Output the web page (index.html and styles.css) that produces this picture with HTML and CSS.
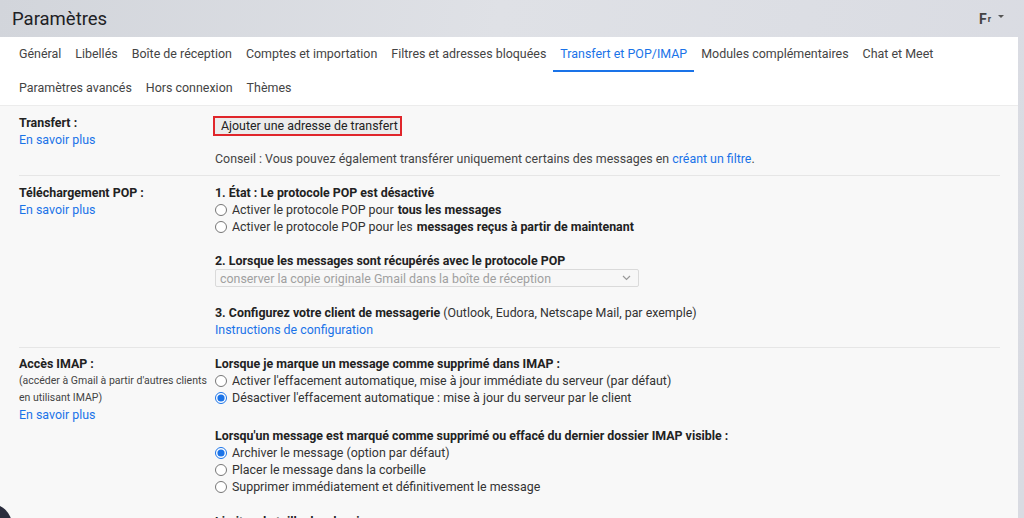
FILE: index.html
```html
<!doctype html>
<html lang="fr">
  <head>
    <meta charset="UTF-8" />
    <meta name="viewport" content="width=device-width, initial-scale=1.0" />
    <title>Paramètres</title>
    <link rel="stylesheet" href="styles.css">
  </head>
  <body>
    <header class="topbar">
      <h1>Paramètres</h1>
      <div class="input-tools">F<span class="small-r">r</span><span class="caret"></span></div>
    </header>

    <main class="settings">
      <nav class="tabs">
        <div class="tab-row">
          <a class="tab">Général</a>
          <a class="tab">Libellés</a>
          <a class="tab">Boîte de réception</a>
          <a class="tab">Comptes et importation</a>
          <a class="tab">Filtres et adresses bloquées</a>
          <a class="tab active">Transfert et POP/IMAP</a>
          <a class="tab">Modules complémentaires</a>
          <a class="tab">Chat et Meet</a>
        </div>
        <div class="tab-row">
          <a class="tab">Paramètres avancés</a>
          <a class="tab">Hors connexion</a>
          <a class="tab">Thèmes</a>
        </div>
      </nav>

      <div class="content">
        <section class="setting first">
          <div class="label">
            <b>Transfert :</b>
            <a class="link">En savoir plus</a>
          </div>
          <div class="value">
            <div class="highlight-box">
              <button class="btn">Ajouter une adresse de transfert</button>
            </div>
            <p class="hint">Conseil : Vous pouvez également transférer uniquement certains des messages en <a class="link">créant un filtre</a>.</p>
          </div>
        </section>

        <section class="setting">
          <div class="label">
            <b>Téléchargement POP :</b>
            <a class="link">En savoir plus</a>
          </div>
          <div class="value">
            <p class="heading">1. État : Le protocole POP est désactivé</p>
            <label class="option"><input type="radio" name="pop" /> Activer le protocole POP pour <b>tous les messages</b></label>
            <label class="option"><input type="radio" name="pop" /> Activer le protocole POP pour les <b>messages reçus à partir de maintenant</b></label>

            <p class="heading spaced">2. Lorsque les messages sont récupérés avec le protocole POP</p>
            <div class="select disabled">
              <span>conserver la copie originale Gmail dans la boîte de réception</span>
              <svg width="9" height="6" viewBox="0 0 9 6"><path d="M1 1l3.5 3.5L8 1" fill="none" stroke="#999" stroke-width="1.2"/></svg>
            </div>

            <p class="heading step3"><b>3. Configurez votre client de messagerie</b> (Outlook, Eudora, Netscape Mail, par exemple)</p>
            <a class="link">Instructions de configuration</a>
          </div>
        </section>

        <section class="setting last">
          <div class="label">
            <b>Accès IMAP :</b>
            <span class="note">(accéder à Gmail à partir d'autres clients en utilisant IMAP)</span>
            <a class="link">En savoir plus</a>
          </div>
          <div class="value">
            <p class="heading">Lorsque je marque un message comme supprimé dans IMAP :</p>
            <label class="option"><input type="radio" name="expunge" /> Activer l'effacement automatique, mise à jour immédiate du serveur (par défaut)</label>
            <label class="option"><input type="radio" name="expunge" checked /> Désactiver l'effacement automatique : mise à jour du serveur par le client</label>

            <p class="heading group">Lorsqu'un message est marqué comme supprimé ou effacé du dernier dossier IMAP visible :</p>
            <label class="option"><input type="radio" name="deleted" checked /> Archiver le message (option par défaut)</label>
            <label class="option"><input type="radio" name="deleted" /> Placer le message dans la corbeille</label>
            <label class="option"><input type="radio" name="deleted" /> Supprimer immédiatement et définitivement le message</label>

            <p class="heading group-next">Limites de taille des dossiers</p>
          </div>
        </section>
      </div>
    </main>

    <div class="corner-blob"></div>
  </body>
</html>
```

FILE: styles.css
```css
body {
  margin: 0;
  height: 518px;
  overflow: hidden;
  font-family: Roboto, "Liberation Sans", Arial, sans-serif;
  color: #222;
  background: linear-gradient(100deg, #d2d5db 0%, #dfe1e6 45%, #d9dbe2 100%);
}
.topbar {
  display: flex;
  align-items: center;
  justify-content: space-between;
  height: 37px;
  padding: 0 20px 0 12px;
}
.topbar h1 {
  margin: 0;
  font-size: 18.5px;
  font-weight: 400;
  color: #202124;
}
.input-tools {
  display: flex;
  align-items: center;
  font-size: 14px;
  font-weight: 700;
  color: #444;
}
.small-r {
  font-size: 9px;
  margin-left: 1px;
}
.caret {
  width: 0;
  height: 0;
  margin-left: 7px;
  margin-bottom: 4px;
  border-left: 3px solid transparent;
  border-right: 3px solid transparent;
  border-top: 3px solid #555;
}
.settings {
  margin-right: 6px;
  background: #f8f8f8;
  height: 481px;
}
.tabs {
  background: #fff;
  padding: 0 12px;
  border-bottom: 1px solid #ececec;
}
.tab-row {
  display: flex;
  height: 34px;
}
.tab {
  display: flex;
  align-items: center;
  padding: 0 7px;
  font-size: 12.45px;
  color: #444;
  white-space: nowrap;
  border-bottom: 2px solid transparent;
  margin-bottom: -1px;
}
.tab.active {
  color: #1a73e8;
  border-bottom-color: #1a73e8;
}
.content {
  padding: 0 18px 0 19px;
  font-size: 12.4px;
  line-height: 17px;
}
.setting {
  display: grid;
  grid-template-columns: 196px 1fr;
  padding: 8px 0 9px;
  border-bottom: 1px solid #e6e6e6;
}
.setting.first {
  padding-bottom: 8px;
}
.setting.last {
  border-bottom: none;
  padding-top: 7px;
}
.label {
  display: flex;
  flex-direction: column;
  align-items: flex-start;
}
.label b {
  color: #222;
}
.note {
  font-size: 10.5px;
  color: #444;
}
.link {
  color: #1a73e8;
  cursor: pointer;
}
.value {
  display: flex;
  flex-direction: column;
  align-items: flex-start;
  color: #333;
}
.value p {
  margin: 0;
}
.highlight-box {
  margin: 2px 0 0 -2px;
  border: 2px solid #e0262b;
  display: flex;
}
.btn {
  height: 16px;
  padding: 0 2px 0 6px;
  border: none;
  background: #ececec;
  font-family: inherit;
  font-size: 12.4px;
  line-height: 16px;
  color: #222;
}
.hint {
  margin-top: 14px !important;
  color: #444;
}
.heading {
  font-weight: 700;
  color: #222;
}
.heading.step3 {
  font-weight: 400;
  color: #333;
  margin-top: 17px;
}
.heading.step3 b {
  color: #222;
}
.spaced {
  margin-top: 17px !important;
}
.group {
  margin-top: 21px !important;
}
.group-next {
  margin-top: 18px !important;
}
.option {
  display: flex;
  align-items: center;
  color: #333;
}
.option b {
  color: #222;
  margin-left: 4px;
}
.option input {
  width: 12px;
  height: 12px;
  margin: 0 5px 0 0;
  accent-color: #1a73e8;
}
.select {
  display: flex;
  align-items: center;
  justify-content: space-between;
  box-sizing: border-box;
  width: 424px;
  height: 18px;
  padding: 0 7px 0 4px;
  border: 1px solid #dadada;
  border-radius: 2px;
  background: #f7f7f7;
  color: #a0a0a0;
}
.corner-blob {
  position: absolute;
  left: -30px;
  top: 504px;
  width: 42px;
  height: 42px;
  border-radius: 50%;
  background: #2a2d3d;
}
```
